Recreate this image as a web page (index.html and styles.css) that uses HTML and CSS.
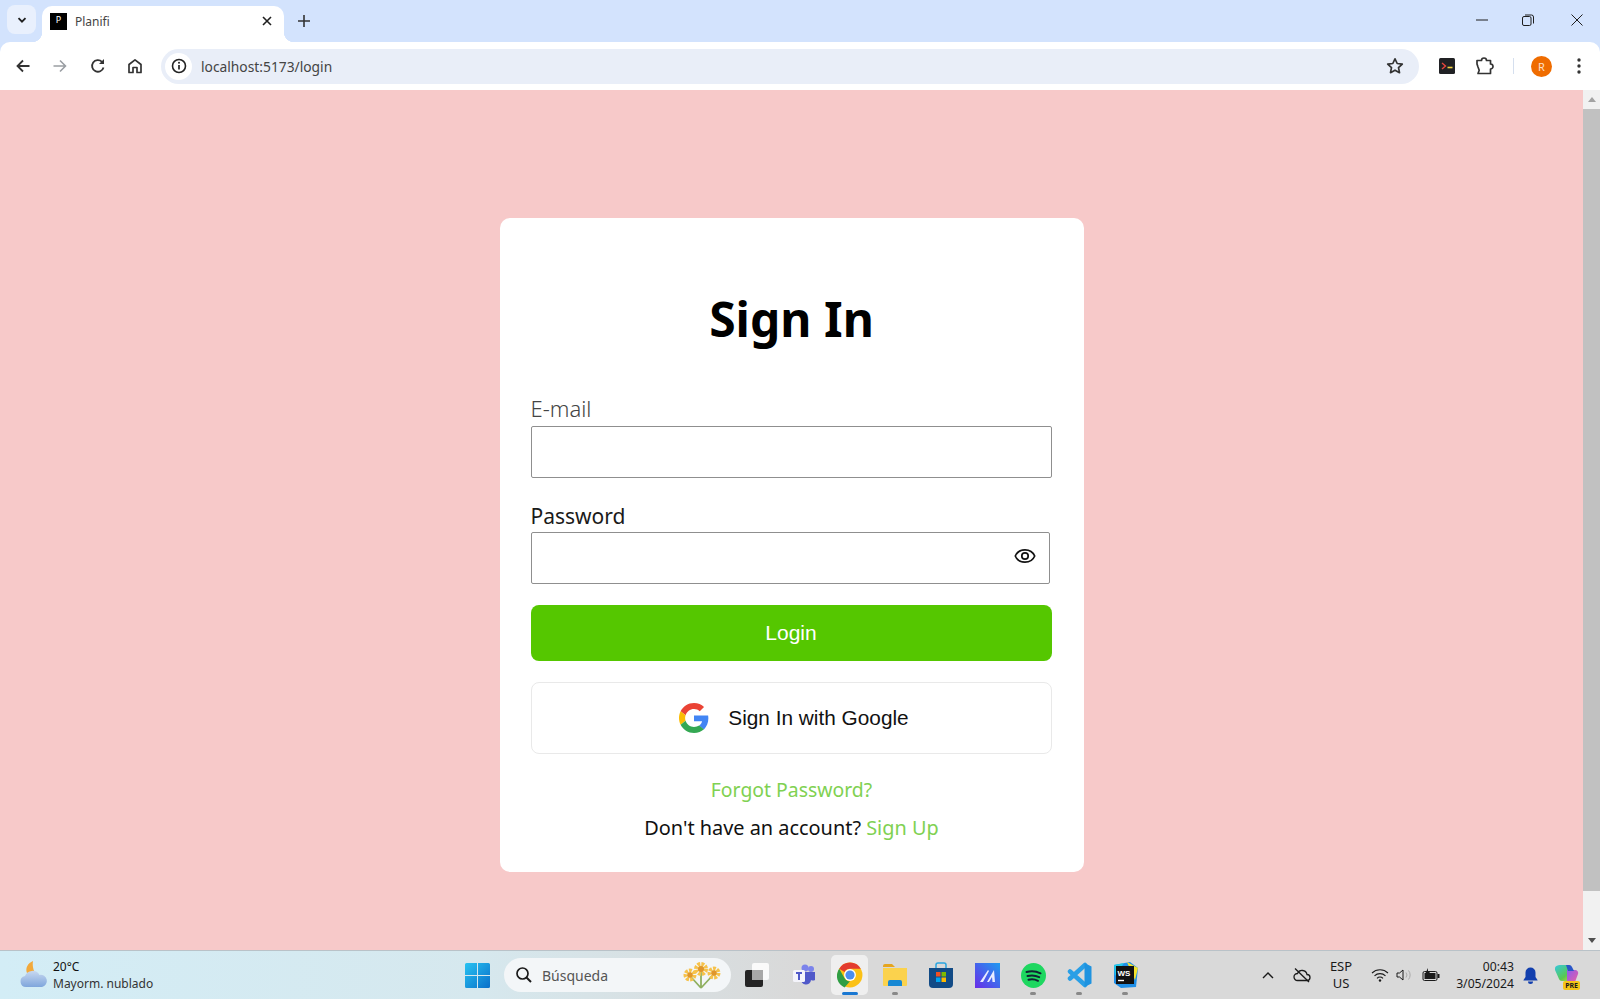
FILE: index.html
```html
<!DOCTYPE html>
<html lang="es">
<head>
  <meta charset="UTF-8">
  <title>Planifi</title>
  <link rel="stylesheet" href="styles.css">
</head>
<body>
  <div class="browser-top">
    <div class="tabstrip">
      <div class="tab-search">
        <svg width="12" height="12" viewBox="0 0 12 12"><path d="M2.500 4.200 6 7.700l3.500-3.500" fill="none" stroke="#1f1f1f" stroke-width="1.800"/></svg>
      </div>
      <div class="tab">
        <div class="favicon">P</div>
        <span class="tab-title">Planifi</span>
        <svg class="tab-close" width="12" height="12" viewBox="0 0 12 12"><path d="M2 2l8 8M10 2l-8 8" stroke="#1f1f1f" stroke-width="1.600"/></svg>
      </div>
      <svg class="new-tab" width="14" height="14" viewBox="0 0 14 14"><path d="M7 1v12M1 7h12" stroke="#333" stroke-width="1.600"/></svg>
      <div class="win-controls">
        <svg width="12" height="12" viewBox="0 0 12 12"><path d="M0 6h12" stroke="#1f1f1f" stroke-width="1"/></svg>
        <svg width="12" height="12" viewBox="0 0 12 12"><rect x="0.500" y="2.500" width="8.500" height="9" rx="1.500" fill="none" stroke="#1f1f1f"/><path d="M3 1h6.500a2 2 0 0 1 2 2v6.500" fill="none" stroke="#1f1f1f"/></svg>
        <svg class="win-close" width="12" height="12" viewBox="0 0 12 12"><path d="M0.500 0.500l11 11M11.500 0.500l-11 11" stroke="#1f1f1f"/></svg>
      </div>
    </div>

    <div class="toolbar">
      <svg class="tool" width="16" height="16" viewBox="0 0 16 16"><path d="M14.500 8H2.500M8 2.500 2.500 8 8 13.500" fill="none" stroke="#333" stroke-width="1.800"/></svg>
      <svg class="tool tool-forward" width="16" height="16" viewBox="0 0 16 16"><path d="M1.500 8h12M8 2.500 13.500 8 8 13.500" fill="none" stroke="#9a9ea3" stroke-width="1.600"/></svg>
      <svg class="tool" width="16" height="16" viewBox="0 0 16 16"><path d="M13.500 9.500A5.800 5.800 0 1 1 12 3.800" fill="none" stroke="#333" stroke-width="1.800"/><path d="M14 1v5H9z" fill="#333"/></svg>
      <svg class="tool" width="16" height="16" viewBox="0 0 16 16"><path d="M2 14.500V6.500L8 1.800l6 4.700v8h-4v-5H6v5z" fill="none" stroke="#333" stroke-width="1.700" stroke-linejoin="round"/></svg>
      <div class="omnibox">
        <div class="site-info">
          <svg width="16" height="16" viewBox="0 0 16 16"><circle cx="8" cy="8" r="6.500" fill="none" stroke="#222" stroke-width="1.600"/><path d="M8 7v4.500" stroke="#222" stroke-width="1.700"/><circle cx="8" cy="4.800" r="1" fill="#222"/></svg>
        </div>
        <span class="url">localhost:5173/login</span>
        <svg class="star" width="18" height="18" viewBox="0 0 18 18"><path d="M9 1.800l2.200 4.700 5.100.6-3.800 3.500 1 5.100L9 13.200l-4.500 2.500 1-5.100L1.700 7.100l5.100-.6z" fill="none" stroke="#333" stroke-width="1.700" stroke-linejoin="round"/></svg>
      </div>
      <div class="ext-terminal">
        <svg width="16" height="16" viewBox="0 0 16 16"><rect width="16" height="16" rx="1.500" fill="#202124"/><path d="M3 5l3.500 3L3 11" fill="none" stroke="#e8453c" stroke-width="1.400"/><path d="M8.500 9.500h5" stroke="#f5d33f" stroke-width="1.600"/></svg>
      </div>
      <svg class="ext-puzzle" width="20" height="20" viewBox="0 0 20 20"><path d="M2 4.500h4.500a2.500 2.500 0 0 1 5 0H15.500V8a2.500 2.500 0 0 1 0 5v4.500H3l1.200-3.300L3 11l-1-3z" fill="none" stroke="#333" stroke-width="1.700" stroke-linejoin="round"/></svg>
      <div class="tool-divider"></div>
      <div class="avatar">R</div>
      <svg class="tool-menu" width="4" height="16" viewBox="0 0 4 16"><circle cx="2" cy="2" r="1.700" fill="#333"/><circle cx="2" cy="8" r="1.700" fill="#333"/><circle cx="2" cy="14" r="1.700" fill="#333"/></svg>
    </div>
  </div>

  <div class="viewport">
    <main class="page">
      <form class="card">
        <h1>Sign In</h1>
        <label class="label label-light">E-mail</label>
        <input class="field" type="text">
        <label class="label label-pass">Password</label>
        <div class="pass-wrap">
          <input class="field" type="password">
          <svg class="eye" width="24" height="24" viewBox="0 0 24 24"><path d="M12 5.800c-4.500 0-8.200 2.600-9.700 6.200 1.500 3.600 5.200 6.200 9.700 6.200s8.200-2.600 9.700-6.200c-1.500-3.600-5.200-6.200-9.700-6.200z" fill="none" stroke="#111" stroke-width="1.700"/><circle cx="12" cy="12" r="3.200" fill="none" stroke="#111" stroke-width="1.700"/></svg>
        </div>
        <button class="btn-login" type="button">Login</button>
        <button class="btn-google" type="button">
          <svg width="30" height="30" viewBox="0 0 48 48">
            <path fill="#EA4335" d="M24 9.500c3.540 0 6.710 1.220 9.210 3.600l6.850-6.850C35.900 2.380 30.470 0 24 0 14.620 0 6.510 5.380 2.560 13.220l7.980 6.190C12.430 13.720 17.740 9.500 24 9.500z"/>
            <path fill="#4285F4" d="M46.980 24.550c0-1.570-.15-3.090-.38-4.550H24v9.020h12.940c-.58 2.960-2.260 5.480-4.780 7.180l7.730 6c4.510-4.180 7.090-10.360 7.090-17.650z"/>
            <path fill="#FBBC05" d="M10.530 28.590c-.48-1.450-.76-2.990-.76-4.590s.27-3.140.76-4.590l-7.980-6.190C.92 16.460 0 20.120 0 24c0 3.880.92 7.540 2.560 10.780l7.970-6.190z"/>
            <path fill="#34A853" d="M24 48c6.480 0 11.930-2.130 15.890-5.810l-7.730-6c-2.150 1.450-4.920 2.300-8.160 2.300-6.260 0-11.570-4.220-13.470-9.910l-7.980 6.190C6.510 42.620 14.620 48 24 48z"/>
          </svg>
          <span>Sign In with Google</span>
        </button>
        <a class="link forgot" href="#">Forgot Password?</a>
        <p class="signup">Don't have an account? <a class="link" href="#">Sign Up</a></p>
      </form>
    </main>
    <div class="scrollbar">
      <div class="scroll-up"></div>
      <div class="scroll-thumb"></div>
      <div class="scroll-down"></div>
    </div>
  </div>

  <footer class="taskbar">
    <div class="weather">
      <svg width="28" height="30" viewBox="0 0 28 30">
        <defs><linearGradient id="cloud" x1="0" y1="0" x2="0" y2="1"><stop offset="0" stop-color="#c8d8f0"/><stop offset="1" stop-color="#7fa6dc"/></linearGradient></defs>
        <path d="M13 1c-5 2-8 7-6 12 1 3 6 5 11 3-4-3-6-9-5-15z" fill="#f2a93b"/>
        <path d="M6 27a5.500 5.500 0 0 1-1-10.900A8 8 0 0 1 19.500 15a6 6 0 0 1 2.500 12z" fill="url(#cloud)"/>
      </svg>
      <div class="weather-text">
        <span class="temp">20°C</span>
        <span>Mayorm. nublado</span>
      </div>
    </div>
    <div class="task-item">
      <svg width="25" height="25" viewBox="0 0 25 25">
        <defs><linearGradient id="win" x1="0" y1="0" x2="1" y2="1"><stop offset="0" stop-color="#28c3f2"/><stop offset="1" stop-color="#0a6fc9"/></linearGradient></defs>
        <path d="M0 1.500A1.500 1.500 0 0 1 1.500 0H12v12H0zM13 0h10.500A1.500 1.500 0 0 1 25 1.500V12H13zM0 13h12v12H1.500A1.500 1.500 0 0 1 0 23.500zM13 13h12v10.500a1.500 1.500 0 0 1-1.500 1.500H13z" fill="url(#win)"/>
      </svg>
    </div>
    <div class="search">
      <svg width="18" height="18" viewBox="0 0 18 18"><circle cx="7.500" cy="7.500" r="5.500" fill="none" stroke="#1a1a1a" stroke-width="1.700"/><path d="M11.500 11.500 16 16" stroke="#1a1a1a" stroke-width="2"/></svg>
      <span>Búsqueda</span>
      <svg class="flowers" width="40" height="30" viewBox="0 0 40 30">
        <path d="M9 17l10 11M19 10v18M31 15 19 28" stroke="#8fb060" stroke-width="1.800"/>
        <circle cx="19" cy="9" r="4.500" fill="none" stroke="#f6c24a" stroke-width="5" stroke-dasharray="2.500 1"/><circle cx="19" cy="9" r="3" fill="#e0962c"/>
        <circle cx="8" cy="15" r="4" fill="none" stroke="#f6c24a" stroke-width="5" stroke-dasharray="2.500 1"/><circle cx="8" cy="15" r="2.700" fill="#e0962c"/>
        <circle cx="32" cy="13" r="4" fill="none" stroke="#f6c24a" stroke-width="5" stroke-dasharray="2.500 1"/><circle cx="32" cy="13" r="2.700" fill="#e0962c"/>
      </svg>
    </div>
    <div class="task-item task-view">
      <svg width="26" height="26" viewBox="0 0 26 26">
        <rect x="8" y="1" width="17" height="17" rx="2" fill="#fafafa"/>
        <rect x="1" y="8" width="18" height="17" rx="2" fill="#242424"/>
        <rect x="8" y="8" width="11" height="10" fill="#a8a8a8"/>
      </svg>
    </div>
    <div class="task-item">
      <svg width="24" height="24" viewBox="0 0 24 24">
        <circle cx="19" cy="6" r="3" fill="#7b83eb"/><circle cx="13" cy="5" r="3.500" fill="#7b83eb"/>
        <path d="M9 9h14v8a4 4 0 0 1-4 0 5 5 0 0 1-10-1z" fill="#5059c9"/>
        <rect x="1" y="7" width="12" height="12" rx="1.500" fill="#f4f4fb"/>
        <path d="M4 10h6M7 10v7" stroke="#5059c9" stroke-width="2"/>
      </svg>
    </div>
    <div class="task-item task-active">
      <svg width="26" height="26" viewBox="0 0 48 48">
        <circle cx="24" cy="24" r="23" fill="#fbc116"/>
        <path d="M24 1a23 23 0 0 1 19.900 11.500H24a11.500 11.500 0 0 0-10 5.800L4.100 12.500A23 23 0 0 1 24 1z" fill="#e33b2e"/>
        <path d="M4.100 12.500 14 29.800a11.500 11.500 0 0 0 10 5.700L14 47A23 23 0 0 1 4.100 12.500z" fill="#2f9e44"/>
        <circle cx="24" cy="24" r="11" fill="#fff"/><circle cx="24" cy="24" r="8.500" fill="#4a8ef0"/>
      </svg>
      <i class="dot dot-blue"></i>
    </div>
    <div class="task-item">
      <svg width="26" height="24" viewBox="0 0 26 24">
        <path d="M1 3a2 2 0 0 1 2-2h7l3 3h-12z" fill="#e5a51f"/>
        <path d="M1 5h24v17a1 1 0 0 1-1 1H2a1 1 0 0 1-1-1z" fill="#fbd24d"/>
        <path d="M6 23v-4a2 2 0 0 1 2-2h10a2 2 0 0 1 2 2v4z" fill="#1788d4"/>
      </svg>
      <i class="dot"></i>
    </div>
    <div class="task-item">
      <svg width="24" height="26" viewBox="0 0 24 26">
        <path d="M7 6V3a2 2 0 0 1 2-2h6a2 2 0 0 1 2 2v3" fill="none" stroke="#2aa5e0" stroke-width="1.500"/>
        <path d="M0 6h24v16a4 4 0 0 1-4 4H4a4 4 0 0 1-4-4z" fill="#124b86"/>
        <rect x="7" y="10" width="4.500" height="4.500" fill="#f25022"/><rect x="12.500" y="10" width="4.500" height="4.500" fill="#7fba00"/>
        <rect x="7" y="15.500" width="4.500" height="4.500" fill="#00a4ef"/><rect x="12.500" y="15.500" width="4.500" height="4.500" fill="#ffb900"/>
      </svg>
    </div>
    <div class="task-item">
      <svg width="25" height="25" viewBox="0 0 25 25">
        <defs><linearGradient id="fig" x1="0" y1="1" x2="1" y2="0"><stop offset="0" stop-color="#6a2ce8"/><stop offset="1" stop-color="#1f9bf0"/></linearGradient></defs>
        <rect width="25" height="25" fill="url(#fig)"/>
        <path d="M5 19 13 7l1 1-6 11zM12 19l7-12 1 12h-2.500l-.5-5-3 5z" fill="#e9ecff"/>
      </svg>
    </div>
    <div class="task-item">
      <svg width="25" height="25" viewBox="0 0 25 25">
        <circle cx="12.500" cy="12.500" r="12.500" fill="#1ed760"/>
        <path d="M5.500 9c4.500-1.300 9.500-1 14 1.300M6.500 13c3.800-1 8-.7 11.700 1.100M7.500 16.800c3-.8 6.500-.5 9.500 1" fill="none" stroke="#123" stroke-width="2" stroke-linecap="round"/>
      </svg>
      <i class="dot"></i>
    </div>
    <div class="task-item">
      <svg width="26" height="26" viewBox="0 0 26 26">
        <path d="M19 3 4 16.500M19 23 4 9.500" stroke="#2a9fe6" stroke-width="4.500" stroke-linecap="round"/>
        <path d="M18.500 1 25.500 4.500v17L18.500 25z" fill="#1f93e0"/>
      </svg>
      <i class="dot"></i>
    </div>
    <div class="task-item">
      <svg width="26" height="26" viewBox="0 0 26 26">
        <path d="M2 3 18 0l8 6-2 19-15 1-7-5z" fill="#1f8fe8"/>
        <path d="M2 3 12 1 3 14z" fill="#21c9e8"/>
        <path d="M15 0l11 6-3 12z" fill="#f5e32c"/>
        <rect x="4" y="4" width="18" height="18" fill="#111"/>
        <text x="5.500" y="13.500" class="ws-text">WS</text>
        <path d="M6 18.500h6" stroke="#fff" stroke-width="1.400"/>
      </svg>
      <i class="dot"></i>
    </div>

    <div class="tray">
      <svg class="tray-caret" width="12" height="8" viewBox="0 0 12 8"><path d="M1 7l5-5 5 5" fill="none" stroke="#1a1a1a" stroke-width="1.400"/></svg>
      <svg class="tray-cloud" width="18" height="16" viewBox="0 0 18 16"><path d="M4.500 13.500a3.500 3.500 0 0 1 0-7 5 5 0 0 1 9.500 1 3 3 0 0 1 0 6z" fill="none" stroke="#1a1a1a" stroke-width="1.300"/><path d="M2 1.500 16 15" stroke="#1a1a1a" stroke-width="1.300"/></svg>
      <div class="lang"><span>ESP</span><span>US</span></div>
      <svg class="tray-wifi" width="18" height="14" viewBox="0 0 18 14"><path d="M1 5a11.500 11.500 0 0 1 16 0M3.500 7.800a8 8 0 0 1 11 0M6 10.300a4.300 4.300 0 0 1 6 0" fill="none" stroke="#1a1a1a" stroke-width="1.100"/><circle cx="9" cy="12.500" r="1.200" fill="#1a1a1a"/></svg>
      <svg class="tray-sound" width="18" height="14" viewBox="0 0 18 14"><path d="M1 5v4h2.500L7 12V2L3.500 5z" fill="none" stroke="#1a1a1a"/><path d="M10 4.500a4 4 0 0 1 0 5M12.500 2.500a7 7 0 0 1 0 9" fill="none" stroke="#aaa"/></svg>
      <svg class="tray-battery" width="18" height="14" viewBox="0 0 18 14"><rect x="1" y="3.500" width="14" height="9" rx="1.500" fill="none" stroke="#1a1a1a"/><rect x="2.500" y="5" width="11" height="6" fill="#1a1a1a"/><rect x="15.500" y="6" width="2" height="4" fill="#1a1a1a"/><path d="M6 0 3.500 5H6L5 8l3-4H6z" fill="#1a1a1a"/></svg>
      <div class="clock"><span>00:43</span><span>3/05/2024</span></div>
      <svg class="tray-bell" width="15" height="17" viewBox="0 0 15 17"><path d="M7.500 0.500a5 5 0 0 1 5 5v4.500l2 3v.5H.5V13l2-3V5.500a5 5 0 0 1 5-5z" fill="#123fae"/><path d="M5 14.500h5a2.500 2.500 0 0 1-5 0z" fill="#123fae"/></svg>
      <div class="copilot">
        <svg width="24" height="22" viewBox="0 0 24 22">
          <defs>
            <linearGradient id="cop-a" x1="0" y1="0" x2="1" y2="1"><stop offset="0" stop-color="#35c8e0"/><stop offset="0.6" stop-color="#59c94f"/><stop offset="1" stop-color="#e8d93c"/></linearGradient>
            <linearGradient id="cop-b" x1="0" y1="0" x2="1" y2="1"><stop offset="0" stop-color="#8c5cf0"/><stop offset="1" stop-color="#f0609c"/></linearGradient>
          </defs>
          <path d="M5 1h7a3 3 0 0 1 3 2l5 14H7a3 3 0 0 1-3-2L0 6c-1-3 2-5 5-5z" fill="url(#cop-a)"/>
          <path d="M12 6h8a3 3 0 0 1 3 4l-3 8a3 3 0 0 1-3 2h-5z" fill="url(#cop-b)"/>
          <path d="M11 1h3a3 3 0 0 1 3 2l2 4h-6z" fill="#2a56c8"/>
        </svg>
        <span class="pre">PRE</span>
      </div>
    </div>
  </footer>
</body>
</html>
```

FILE: styles.css
```css
* {
  box-sizing: border-box;
}
html, body {
  height: 999px;
  margin: 0;
  overflow: hidden;
}
body {
  display: flex;
  flex-direction: column;
  font-family: 'Noto Sans', sans-serif;
  background: #f7c9c9;
  color: #000;
}

/* browser tabs */
.browser-top {
  flex: none;
  background: #d3e3fd;
}
.tabstrip {
  height: 42px;
  display: flex;
  align-items: flex-end;
}
.tab-search {
  width: 29px;
  height: 29px;
  margin: 0 6px 8px 7px;
  border-radius: 8px;
  background: #e9f0fd;
  display: flex;
  align-items: center;
  justify-content: center;
}
.tab {
  position: relative;
  width: 242px;
  height: 36px;
  display: flex;
  align-items: center;
  padding: 0 11px 6px 8px;
  background: #fff;
  border-radius: 10px 10px 0 0;
}
.tab::before,
.tab::after {
  content: "";
  position: absolute;
  bottom: 0;
  width: 10px;
  height: 10px;
}
.tab::before {
  left: -10px;
  background: radial-gradient(circle at 0 0, transparent 10px, #fff 10.500px);
}
.tab::after {
  right: -10px;
  background: radial-gradient(circle at 100% 0, transparent 10px, #fff 10.500px);
}
.favicon {
  width: 17px;
  height: 17px;
  background: #000;
  color: #fff;
  font-size: 9px;
  line-height: 13px;
  text-align: center;
}
.tab-title {
  margin-left: 8px;
  font-size: 12px;
  color: #444;
  flex: 1;
}
.new-tab {
  margin: 0 0 14px 13px;
}
.win-controls {
  margin-left: auto;
  display: flex;
  gap: 34px;
  padding: 0 17px 16px 0;
}
.win-close {
  margin-left: 3px;
}

/* address bar */
.toolbar {
  height: 48px;
  display: flex;
  align-items: center;
  background: #fff;
  border-radius: 10px 10px 0 0;
  padding-left: 15px;
}
.tool {
  margin-right: 21px;
}
.tool-forward {
  margin-right: 22px;
}
.omnibox {
  width: 1258px;
  height: 35px;
  margin-left: -3px;
  display: flex;
  align-items: center;
  padding: 0 15px 0 4px;
  background: #e9eef8;
  border-radius: 18px;
}
.site-info {
  width: 27px;
  height: 27px;
  border-radius: 50%;
  background: #fff;
  display: flex;
  align-items: center;
  justify-content: center;
}
.url {
  margin-left: 9px;
  font-size: 13.800px;
  color: #444;
  flex: 1;
}
.ext-terminal {
  margin-left: 20px;
  display: flex;
}
.ext-puzzle {
  margin-left: 20px;
}
.tool-divider {
  width: 1px;
  height: 16px;
  margin: 0 17px 0 18px;
  background: #d5dfee;
}
.avatar {
  width: 21px;
  height: 21px;
  border-radius: 50%;
  background: #ef6c00;
  color: #fde0c8;
  font-size: 11px;
  line-height: 21px;
  text-align: center;
}
.tool-menu {
  margin-left: 25px;
}

/* page */
.viewport {
  flex: 1;
  min-height: 0;
  display: flex;
  border-bottom: 1px solid #b9c2c8;
}
.page {
  flex: 1;
  display: flex;
  justify-content: center;
  align-items: flex-start;
  padding-top: 128px;
}
.card {
  width: 584px;
  height: 654px;
  padding: 0 31px;
  display: flex;
  flex-direction: column;
  background: #fff;
  border-radius: 10px;
}
.card h1 {
  margin: 63px 0 38px;
  text-align: center;
  font-size: 48px;
  line-height: 76px;
  font-weight: 700;
}
.label {
  font-size: 21px;
  line-height: 31px;
  height: 31px;
  color: #1a1a1a;
}
.label-light {
  font-size: 22px;
  line-height: 27px;
  font-weight: 300;
  color: #444;
}
.label-pass {
  margin-top: 23px;
}
.field {
  width: 521px;
  height: 52px;
  border: 1px solid #8f8f8f;
  border-radius: 2px;
  background: #fff;
  display: block;
}
.pass-wrap {
  position: relative;
  width: 519px;
}
.pass-wrap .field {
  width: 100%;
}
.eye {
  position: absolute;
  right: 13px;
  top: 12px;
}
.btn-login {
  width: 521px;
  height: 56px;
  margin-top: 21px;
  border: 0;
  border-radius: 8px;
  background: #55c700;
  color: #fff;
  font-family: 'Liberation Sans', sans-serif;
  font-size: 21px;
}
.btn-google {
  width: 521px;
  height: 72px;
  margin-top: 21px;
  padding-left: 12px;
  border: 1px solid #e9e9e9;
  border-radius: 8px;
  background: #fff;
  display: flex;
  align-items: center;
  justify-content: center;
  gap: 19px;
  color: #111;
  font-family: 'Liberation Sans', sans-serif;
  font-size: 20.800px;
}
.link {
  color: #7fd152;
  text-decoration: none;
}
.forgot {
  margin-top: 21px;
  text-align: center;
  font-size: 19.400px;
  line-height: 30px;
}
.signup {
  margin: 8px 0 0;
  text-align: center;
  font-size: 19.900px;
  line-height: 30px;
  color: #111;
}

/* scrollbar */
.scrollbar {
  width: 17px;
  display: flex;
  flex-direction: column;
  align-items: center;
  background: #f1f1f1;
}
.scroll-up {
  width: 0;
  height: 0;
  margin: 7px 0 7px;
  border: 4px solid transparent;
  border-top: 0;
  border-bottom: 5px solid #a3a3a3;
}
.scroll-thumb {
  width: 100%;
  height: 782px;
  background: #c1c1c1;
}
.scroll-down {
  width: 0;
  height: 0;
  margin-top: auto;
  margin-bottom: 7px;
  border: 4px solid transparent;
  border-bottom: 0;
  border-top: 5px solid #505050;
}

/* windows taskbar */
.taskbar {
  height: 48px;
  flex: none;
  display: flex;
  align-items: center;
  padding-left: 20px;
  background: linear-gradient(90deg, #d3edf6 0%, #d6e8ee 30%, #d9d9d9 50%, #d9d9d9 100%);
  font-size: 13px;
  color: #1a1a1a;
}
.weather {
  width: 434px;
  display: flex;
  align-items: center;
  gap: 5px;
}
.weather-text {
  display: flex;
  flex-direction: column;
  font-size: 12px;
  line-height: 17px;
  color: #333;
}
.temp {
  color: #111;
}
.task-item {
  position: relative;
  width: 46px;
  height: 40px;
  flex: none;
  display: flex;
  align-items: center;
  justify-content: center;
}
.search {
  width: 227px;
  height: 34px;
  margin: 0 0 0 4px;
  display: flex;
  align-items: center;
  gap: 9px;
  padding: 0 9px 0 11px;
  background: #f3f6f8;
  border-radius: 17px;
  color: #555;
  font-size: 14px;
}
.flowers {
  margin-left: auto;
}
.task-view {
  margin-left: 3px;
  margin-right: 1px;
}
.task-active {
  width: 37px;
  margin: 0 4px;
  background: #efefef;
  border-radius: 5px;
}
.dot {
  position: absolute;
  left: 50%;
  bottom: 0;
  width: 6px;
  height: 3px;
  margin-left: -3px;
  border-radius: 2px;
  background: #888;
}
.dot-blue {
  width: 16px;
  margin-left: -8px;
  background: #1a78d2;
}
.ws-text {
  font-family: 'Liberation Sans', sans-serif;
  font-size: 8px;
  font-weight: 700;
  fill: #fff;
}
.tray {
  flex: 1;
  display: flex;
  align-items: center;
  padding-left: 114px;
}
.tray-cloud {
  margin-left: 19px;
}
.lang {
  width: 40px;
  margin-left: 10px;
  display: flex;
  flex-direction: column;
  align-items: center;
  line-height: 17px;
  font-size: 13px;
}
.tray-wifi {
  margin-left: 10px;
}
.tray-sound {
  margin-left: 7px;
}
.tray-battery {
  margin-left: 8px;
}
.clock {
  width: 74px;
  display: flex;
  flex-direction: column;
  align-items: flex-end;
  line-height: 17px;
  font-size: 12.200px;
}
.tray-bell {
  margin-left: 9px;
}
.copilot {
  position: relative;
  margin-left: 17px;
  display: flex;
}
.pre {
  position: absolute;
  right: -1px;
  bottom: -4px;
  padding: 0 2px;
  background: #f5c518;
  border-radius: 2px;
  font-size: 7px;
  line-height: 9px;
  font-weight: 700;
}
```
